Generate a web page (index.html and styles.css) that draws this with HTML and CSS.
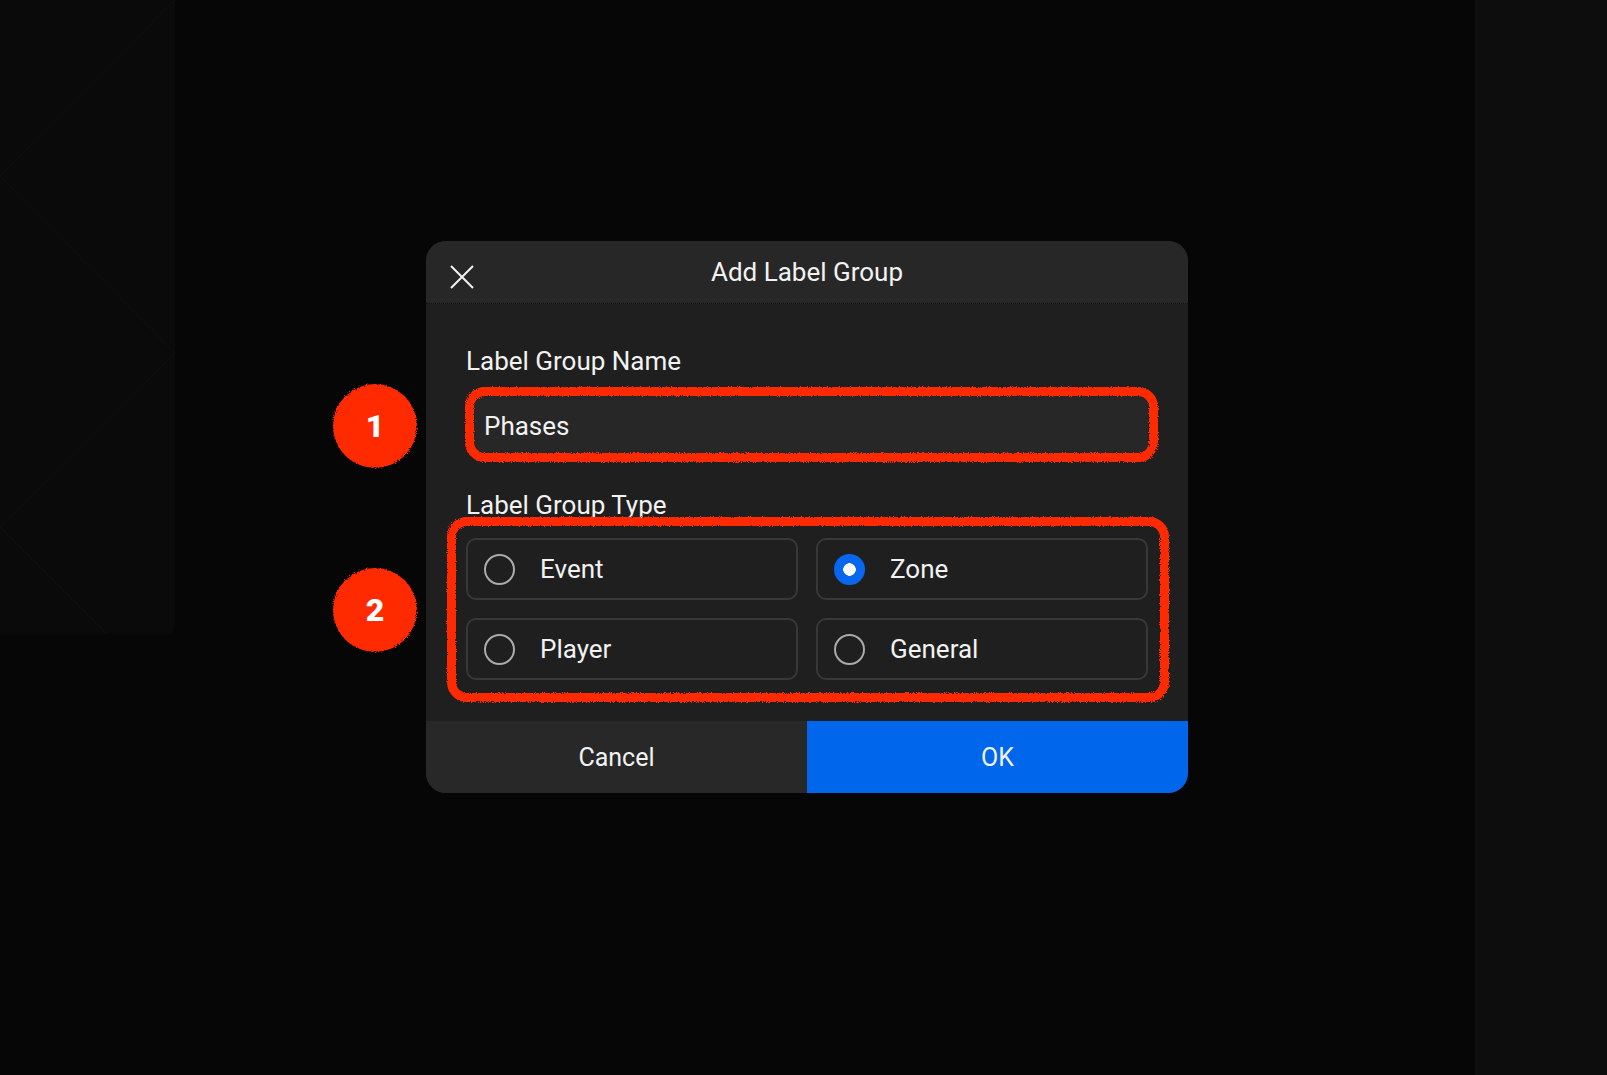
FILE: index.html
```html
<!DOCTYPE html>
<html lang="en">

<head>
    <meta charset="UTF-8" />
    <title>Add Label Group</title>
    <link rel="stylesheet" href="styles.css">
</head>

<body>
    <!-- rough edge filter for the hand drawn annotations -->
    <svg class="defs" width="0" height="0">
        <filter id="rough">
            <feTurbulence type="fractalNoise" baseFrequency="0.9" numOctaves="2" result="noise" />
            <feDisplacementMap in="SourceGraphic" in2="noise" scale="4" />
        </filter>
    </svg>

    <div class="page">
        <aside class="side-left">
            <svg width="175" height="634" viewBox="0 0 175 634">
                <polyline points="175,0 0,176 175,353 0,527 107,634" fill="none" stroke="#101010" stroke-width="1" />
            </svg>
        </aside>

        <main class="stage">
            <div class="dialog">
                <header class="dialog-header">
                    <button class="close-btn" aria-label="Close">
                        <svg width="24" height="24" viewBox="0 0 24 24">
                            <path d="M1 1 L23 23 M23 1 L1 23" stroke="#f2f2f2" stroke-width="2" fill="none" />
                        </svg>
                    </button>
                    <h1>Add Label Group</h1>
                </header>

                <div class="dialog-body">
                    <label class="field-label">Label Group Name</label>
                    <div class="field">
                        <input type="text" value="Phases" />
                        <span class="mark mark-name"></span>
                    </div>

                    <label class="field-label type-label">Label Group Type</label>
                    <div class="type-grid">
                        <div class="option">
                            <span class="radio"></span>
                            <span>Event</span>
                        </div>
                        <div class="option">
                            <span class="radio checked"></span>
                            <span>Zone</span>
                        </div>
                        <div class="option">
                            <span class="radio"></span>
                            <span>Player</span>
                        </div>
                        <div class="option">
                            <span class="radio"></span>
                            <span>General</span>
                        </div>
                        <span class="mark mark-type"></span>
                    </div>
                </div>

                <footer class="dialog-footer">
                    <button class="btn-cancel">Cancel</button>
                    <button class="btn-ok">OK</button>
                </footer>

                <span class="badge badge-1"><b>1</b></span>
                <span class="badge badge-2"><b>2</b></span>
            </div>
        </main>

        <aside class="side-right"></aside>
    </div>
</body>

</html>
```

FILE: styles.css
```css
/* Reset some default styles */
* {
    box-sizing: border-box;
    margin: 0;
    padding: 0;
}

body {
    font-family: Roboto, 'Liberation Sans', sans-serif;
    background-color: #060606;
    color: #f2f2f2;
    width: 1607px;
    height: 1075px;
    overflow: hidden;
}

.defs {
    position: absolute;
}

.page {
    display: flex;
    height: 1075px;
}

.side-left {
    width: 175px;
    height: 634px;
    background-color: #0a0a0a;
    border-bottom-right-radius: 8px;
    overflow: hidden;
}

.side-left svg {
    display: block;
}

.side-right {
    width: 132px;
    background-color: #0d0d0d;
}

.stage {
    flex: 1;
    padding: 241px 0 0 251px;
}

.dialog {
    position: relative;
    width: 762px;
    background-color: #1f1f1f;
    border-radius: 20px;
}

.dialog-header {
    position: relative;
    height: 63px;
    background-color: #272727;
    border-radius: 20px 20px 0 0;
    border-bottom: 1px dotted #111;
    display: flex;
    align-items: center;
    justify-content: center;
}

.dialog-header h1 {
    font-size: 26px;
    font-weight: 400;
    line-height: 30px;
    margin-top: -1px;
}

.close-btn {
    position: absolute;
    left: 24px;
    top: 24px;
    width: 24px;
    height: 24px;
    background: none;
    border: none;
    cursor: pointer;
}

.close-btn svg {
    display: block;
}

.dialog-body {
    padding: 42px 40px 41px;
}

.field-label {
    display: block;
    font-size: 26px;
    line-height: 30px;
    margin-bottom: 19px;
}

.type-label {
    margin-bottom: 18px;
}

.field {
    position: relative;
    margin-bottom: 34px;
}

.field input {
    display: block;
    width: 100%;
    height: 61px;
    padding: 0 18px;
    border: none;
    border-radius: 12px;
    background-color: #272727;
    color: #f2f2f2;
    font-family: inherit;
    font-size: 26px;
    outline: none;
}

.type-grid {
    position: relative;
    display: grid;
    grid-template-columns: 1fr 1fr;
    gap: 18px 18px;
}

.option {
    height: 62px;
    display: flex;
    align-items: center;
    gap: 25px;
    padding-left: 16px;
    border: 2px solid #383838;
    border-radius: 10px;
    font-size: 26px;
}

.radio {
    width: 31px;
    height: 31px;
    border: 2px solid #ababab;
    border-radius: 50%;
    flex-shrink: 0;
}

.radio.checked {
    border: none;
    background: radial-gradient(circle, #ffffff 0 6px, #0767ee 6.5px);
}

.dialog-footer {
    display: flex;
    height: 72px;
    border-radius: 0 0 20px 20px;
    overflow: hidden;
}

.dialog-footer button {
    flex: 1;
    border: none;
    font-family: inherit;
    font-size: 25px;
    color: #f2f2f2;
    padding-top: 1px;
    cursor: pointer;
}

.btn-cancel {
    background-color: #282828;
}

.btn-ok {
    background-color: #0067ed;
}

/* hand drawn annotation marks */
.mark {
    position: absolute;
    border: 9px solid #ff2a05;
    border-radius: 20px;
    filter: url(#rough);
    pointer-events: none;
}

.mark-name {
    top: -8px;
    left: -1px;
    right: -10px;
    bottom: -6px;
}

.mark-type {
    top: -21px;
    left: -19px;
    right: -21px;
    bottom: -22px;
}

.badge {
    position: absolute;
    left: -93px;
    width: 84px;
    height: 84px;
    color: #fff;
    font-size: 32px;
    font-weight: 700;
    display: flex;
    align-items: center;
    justify-content: center;
}

.badge::before {
    content: "";
    position: absolute;
    inset: 0;
    border-radius: 50%;
    background-color: #ff2a05;
    filter: url(#rough);
}

.badge b {
    position: relative;
}

.badge-1 {
    top: 143px;
}

.badge-2 {
    top: 327px;
}
```
